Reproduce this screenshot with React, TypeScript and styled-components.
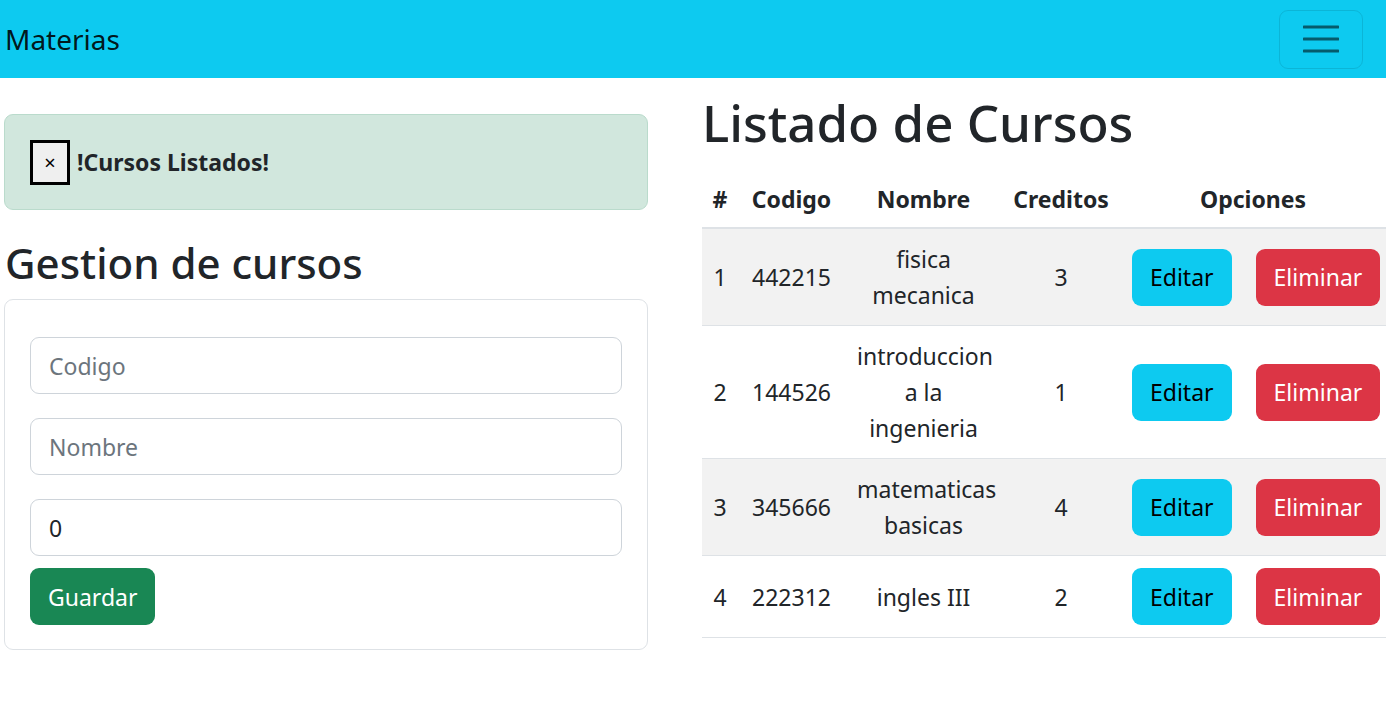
import React from 'react';
import styled, { createGlobalStyle } from 'styled-components';

const GlobalStyle = createGlobalStyle`
  * { box-sizing: border-box; }
  body {
    margin: 0;
    font-family: "Noto Sans", "Open Sans", sans-serif;
    font-size: 23px;
    line-height: 36px;
    color: #212529;
    background: #fff;
  }
`;

const Navbar = styled.nav`
  height: 78px;
  background: #0dcaf0;
  display: flex;
  align-items: center;
  justify-content: space-between;
  padding: 0 23px 0 5px;
`;

const Brand = styled.span`
  font-size: 28px;
  color: rgba(0, 0, 0, 0.9);
  line-height: 1.5;
`;

const Toggler = styled.button`
  width: 84px;
  height: 59px;
  background: transparent;
  border: 1px solid rgba(0, 0, 0, 0.1);
  border-radius: 9px;
  display: flex;
  align-items: center;
  justify-content: center;
  padding: 0;
`;

const Main = styled.main`
  display: grid;
  grid-template-columns: 644px 684px;
  column-gap: 54px;
  padding-left: 4px;
  align-items: start;
`;

const LeftCol = styled.section`
  padding-top: 36px;
`;

const RightCol = styled.section`
  padding-top: 14px;
`;

const Alert = styled.div`
  background: #d1e7dd;
  border: 1px solid #badbcc;
  border-radius: 9px;
  height: 96px;
  padding: 0 25px;
  display: flex;
  align-items: center;
  gap: 7px;
  font-weight: 700;
  color: #212529;
`;

const CloseBtn = styled.button`
  width: 40px;
  height: 45px;
  background: #efefef;
  border: 3px solid #000;
  font-size: 20px;
  font-family: "Noto Sans", sans-serif;
  color: #000;
  padding: 0;
  display: flex;
  align-items: center;
  justify-content: center;
`;

const Heading = styled.h2<{ size: number }>`
  margin: 0;
  font-weight: 500;
  font-size: ${p => p.size}px;
  line-height: 1.2;
  color: #212529;
`;

const SectionTitle = styled(Heading)`
  margin: 28px 0 11px 1px;
`;

const Card = styled.div`
  border: 1px solid #dee2e6;
  border-radius: 9px;
  padding: 37px 25px 24px;
  display: flex;
  flex-direction: column;
`;

const Input = styled.input`
  height: 57px;
  width: 100%;
  border: 1px solid #ced4da;
  border-radius: 9px;
  padding: 0 18px;
  font: inherit;
  color: #212529;
  margin-bottom: 24px;
  &::placeholder { color: #6c757d; }
  &:last-of-type { margin-bottom: 12px; }
`;

const Button = styled.button<{ tone: 'success' | 'info' | 'danger' }>`
  height: 57px;
  padding: 0 17px;
  border: 1px solid transparent;
  border-radius: 9px;
  font: inherit;
  background: ${p => (p.tone === 'success' ? '#198754' : p.tone === 'info' ? '#0dcaf0' : '#dc3545')};
  color: ${p => (p.tone === 'info' ? '#000' : '#fff')};
  align-self: flex-start;
  white-space: nowrap;
`;

const Table = styled.table`
  width: 684px;
  table-layout: fixed;
  border-collapse: collapse;
  margin-top: 20px;
  text-align: center;
`;

const Th = styled.th`
  padding: 8px 0 10px;
  font-weight: 700;
  border-bottom: 2px solid #dee2e6;
`;

const Row = styled.tr<{ striped: boolean }>`
  background: ${p => (p.striped ? '#f2f2f2' : '#fff')};
  border-bottom: 1px solid #dee2e6;
`;

const Td = styled.td`
  padding: 12px;
  vertical-align: middle;
`;

const Options = styled.div`
  display: flex;
  gap: 24px;
`;

const cursos = [
  { codigo: '442215', nombre: 'fisica mecanica', creditos: 3 },
  { codigo: '144526', nombre: 'introduccion a la ingenieria', creditos: 1 },
  { codigo: '345666', nombre: 'matematicas basicas', creditos: 4 },
  { codigo: '222312', nombre: 'ingles III', creditos: 2 },
];

const cols = [36, 107, 157, 118, 266];

export default function App() {
  return (
    <>
      <GlobalStyle />
      <Navbar>
        <Brand>Materias</Brand>
        <Toggler aria-label="menu">
          <svg width="36" height="30" viewBox="0 0 36 30">
            <path d="M1 3h34M1 15h34M1 27h34" stroke="rgba(0,0,0,0.55)" strokeWidth="3" strokeLinecap="round" />
          </svg>
        </Toggler>
      </Navbar>
      <Main>
        <LeftCol>
          <Alert>
            <CloseBtn>×</CloseBtn>
            <span>!Cursos Listados!</span>
          </Alert>
          <SectionTitle size={42}>Gestion de cursos</SectionTitle>
          <Card>
            <Input placeholder="Codigo" />
            <Input placeholder="Nombre" />
            <Input defaultValue="0" />
            <Button tone="success">Guardar</Button>
          </Card>
        </LeftCol>
        <RightCol>
          <Heading as="h1" size={51}>Listado de Cursos</Heading>
          <Table>
            <colgroup>
              {cols.map((w, i) => <col key={i} style={{ width: w }} />)}
            </colgroup>
            <thead>
              <tr>
                <Th>#</Th>
                <Th>Codigo</Th>
                <Th>Nombre</Th>
                <Th>Creditos</Th>
                <Th>Opciones</Th>
              </tr>
            </thead>
            <tbody>
              {cursos.map((c, i) => (
                <Row key={c.codigo} striped={i % 2 === 0}>
                  <Td style={{ padding: '12px 0' }}>{i + 1}</Td>
                  <Td>{c.codigo}</Td>
                  <Td>{c.nombre}</Td>
                  <Td>{c.creditos}</Td>
                  <Td>
                    <Options>
                      <Button tone="info">Editar</Button>
                      <Button tone="danger">Eliminar</Button>
                    </Options>
                  </Td>
                </Row>
              ))}
            </tbody>
          </Table>
        </RightCol>
      </Main>
    </>
  );
}
